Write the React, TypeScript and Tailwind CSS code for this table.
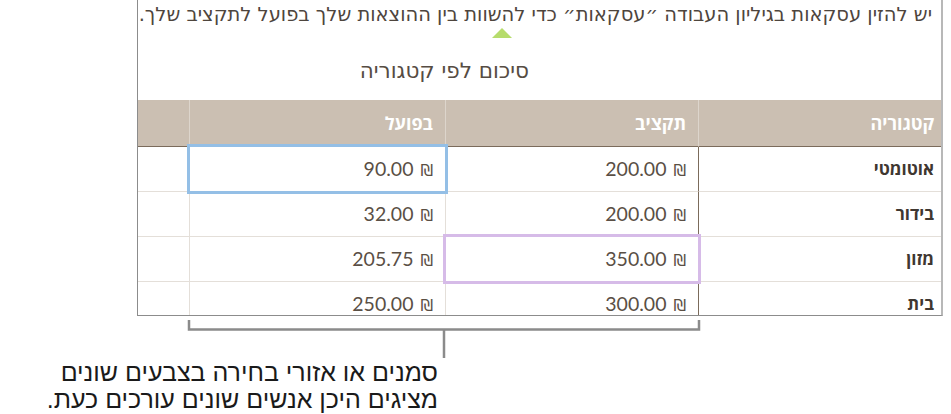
import React from "react"

const rows = [
  { cat: "אוטומטי", budget: "200.00", actual: "90.00", mark: "actual" },
  { cat: "בידור", budget: "200.00", actual: "32.00", mark: "" },
  { cat: "מזון", budget: "350.00", actual: "205.75", mark: "budget" },
  { cat: "בית", budget: "300.00", actual: "250.00", mark: "" },
]

function Money({ value }: { value: string }) {
  return (
    <span dir="ltr" className="inline-flex items-baseline gap-[7px] font-['Lato',sans-serif]">
      {value}
      <span className="font-['DejaVu_Sans',sans-serif] text-[16px]">₪</span>
    </span>
  )
}

function Mark({ color }: { color: string }) {
  return <div className={`pointer-events-none absolute -inset-[3px] z-10 border-[3px] ${color}`} />
}

export default function App() {
  return (
    <div className="h-[414px] w-[951px] overflow-hidden bg-white font-['Open_Sans','Liberation_Sans',sans-serif]">
      {/* document frame */}
      <div
        dir="rtl"
        className="ml-[137px] h-[316px] w-[806px] overflow-hidden border-b border-l border-r-2 border-b-[#8c8c8c] border-l-[#8c8c8c] border-r-[#b8b8b8] text-[#4e453d]"
      >
        <div className="h-[100px] font-['DejaVu_Sans',sans-serif]">
          <div className="h-[28px] whitespace-nowrap pr-[9px] pt-[3px] text-[19.5px] leading-[24px]">
            יש להזין עסקאות בגיליון העבודה ״עסקאות״ כדי להשוות בין ההוצאות שלך בפועל לתקציב שלך.
          </div>
          <div className="mr-[429px] h-0 w-0 border-b-[10px] border-l-[10px] border-r-[10px] border-b-[#b6dc6c] border-l-transparent border-r-transparent" />
          <div className="mr-[412px] mt-[18px] text-[21.5px] leading-[30px] text-[#564c43]">סיכום לפי קטגוריה</div>
        </div>

        {/* table */}
        <div className="grid grid-cols-[243px_253px_256px_1fr]">
          <div className="flex h-[47px] items-center border-b border-l border-b-[#7b6b5b] border-l-[#ddd5cc] bg-[#cbbfb2] pr-[7px] text-[18px] font-bold text-white">
            קטגוריה
          </div>
          <div className="flex h-[47px] items-center border-b border-l border-b-[#7b6b5b] border-l-[#ddd5cc] bg-[#cbbfb2] pr-[12px] text-[18px] font-bold text-white">
            תקציב
          </div>
          <div className="flex h-[47px] items-center border-b border-l border-b-[#7b6b5b] border-l-[#ddd5cc] bg-[#cbbfb2] pr-[12px] text-[18px] font-bold text-white">
            בפועל
          </div>
          <div className="h-[47px] border-b border-b-[#7b6b5b] bg-[#cbbfb2]" />

          {rows.map((r) => (
            <React.Fragment key={r.cat}>
              <div className="flex h-[45px] items-center border-b border-l border-b-[#e4dfd9] border-l-[#7b6b5b] pr-[7px] text-[17px] font-bold text-[#3f3731]">
                {r.cat}
              </div>
              <div className="relative flex h-[45px] items-center border-b border-l border-b-[#e4dfd9] border-l-[#e4dfd9] pr-[12px] text-[19.5px] text-[#5a4f45]">
                <Money value={r.budget} />
                {r.mark === "budget" && <Mark color="border-[#d6bbe8]" />}
              </div>
              <div className="relative flex h-[45px] items-center border-b border-l border-b-[#e4dfd9] border-l-[#e4dfd9] pr-[12px] text-[19.5px] text-[#5a4f45]">
                <Money value={r.actual} />
                {r.mark === "actual" && <Mark color="border-[#94bfe6]" />}
              </div>
              <div className="h-[45px] border-b border-b-[#e4dfd9]" />
            </React.Fragment>
          ))}
        </div>
      </div>

      {/* callout bracket */}
      <svg width="951" height="43" className="block">
        <path d="M189 4 V13.5 H699 V4" fill="none" stroke="#8b8b8b" strokeWidth="2.5" />
        <path d="M444 13.5 V42" fill="none" stroke="#8b8b8b" strokeWidth="2.5" />
      </svg>

      <div
        dir="rtl"
        className="w-[438px] font-['Liberation_Sans',sans-serif] text-[25px] leading-[27px] text-[#1a1a1a]"
      >
        <div>סמנים או אזורי בחירה בצבעים שונים</div>
        <div>מציגים היכן אנשים שונים עורכים כעת.</div>
      </div>
    </div>
  )
}
